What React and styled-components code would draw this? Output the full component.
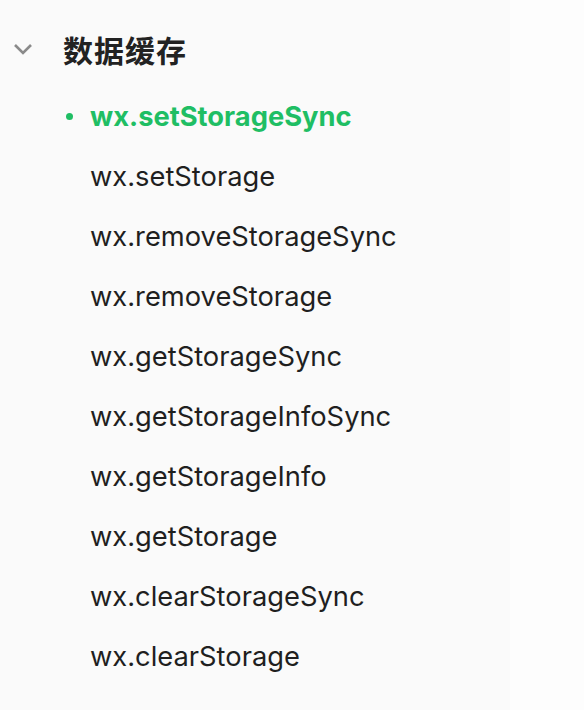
import React from 'react';
import styled, { createGlobalStyle } from 'styled-components';

const GlobalStyle = createGlobalStyle`
  html, body {
    margin: 0;
    padding: 0;
    background: #fdfdfd;
  }
  #root {
    min-height: 710px;
  }
`;

const Page = styled.div`
  display: flex;
  min-height: 710px;
  font-family: Inter, 'Noto Sans CJK SC', sans-serif;
`;

const Sidebar = styled.nav`
  width: 510px;
  background: #fafafa;
  padding-top: 29px;
`;

const GroupHeader = styled.div`
  display: flex;
  align-items: center;
  height: 40px;
  padding-left: 12px;
`;

const Chevron = styled.svg`
  width: 22px;
  height: 14px;
  margin-right: 29px;
  flex-shrink: 0;
`;

const GroupTitle = styled.h2`
  margin: 0;
  font-size: 30px;
  font-weight: 700;
  color: #222;
  font-family: 'Noto Sans CJK SC', sans-serif;
  letter-spacing: 1px;
`;

const List = styled.ul`
  list-style: none;
  margin: 17px 0 0;
  padding: 0;
`;

const Item = styled.li`
  position: relative;
  display: flex;
  align-items: center;
  height: 60px;
  padding-left: 90px;
  font-size: 27.3px;
  font-weight: ${p => (p.$active ? 650 : 400)};
  color: ${p => (p.$active ? '#1fbe64' : '#1f1f1f')};

  &::before {
    content: '';
    display: ${p => (p.$active ? 'block' : 'none')};
    position: absolute;
    left: 66px;
    top: 27px;
    width: 7px;
    height: 7px;
    border-radius: 50%;
    background: #1fbe64;
  }
`;

const items = [
  'wx.setStorageSync',
  'wx.setStorage',
  'wx.removeStorageSync',
  'wx.removeStorage',
  'wx.getStorageSync',
  'wx.getStorageInfoSync',
  'wx.getStorageInfo',
  'wx.getStorage',
  'wx.clearStorageSync',
  'wx.clearStorage',
];

export default function App() {
  return (
    <>
      <GlobalStyle />
      <Page>
        <Sidebar>
          <GroupHeader>
            <Chevron viewBox="0 0 22 14">
              <path d="M3 3 L11 11 L19 3" fill="none" stroke="#8a8a8a" strokeWidth="2.6" />
            </Chevron>
            <GroupTitle>数据缓存</GroupTitle>
          </GroupHeader>
          <List>
            {items.map((name, i) => (
              <Item key={name} $active={i === 0}>{name}</Item>
            ))}
          </List>
        </Sidebar>
      </Page>
    </>
  );
}
